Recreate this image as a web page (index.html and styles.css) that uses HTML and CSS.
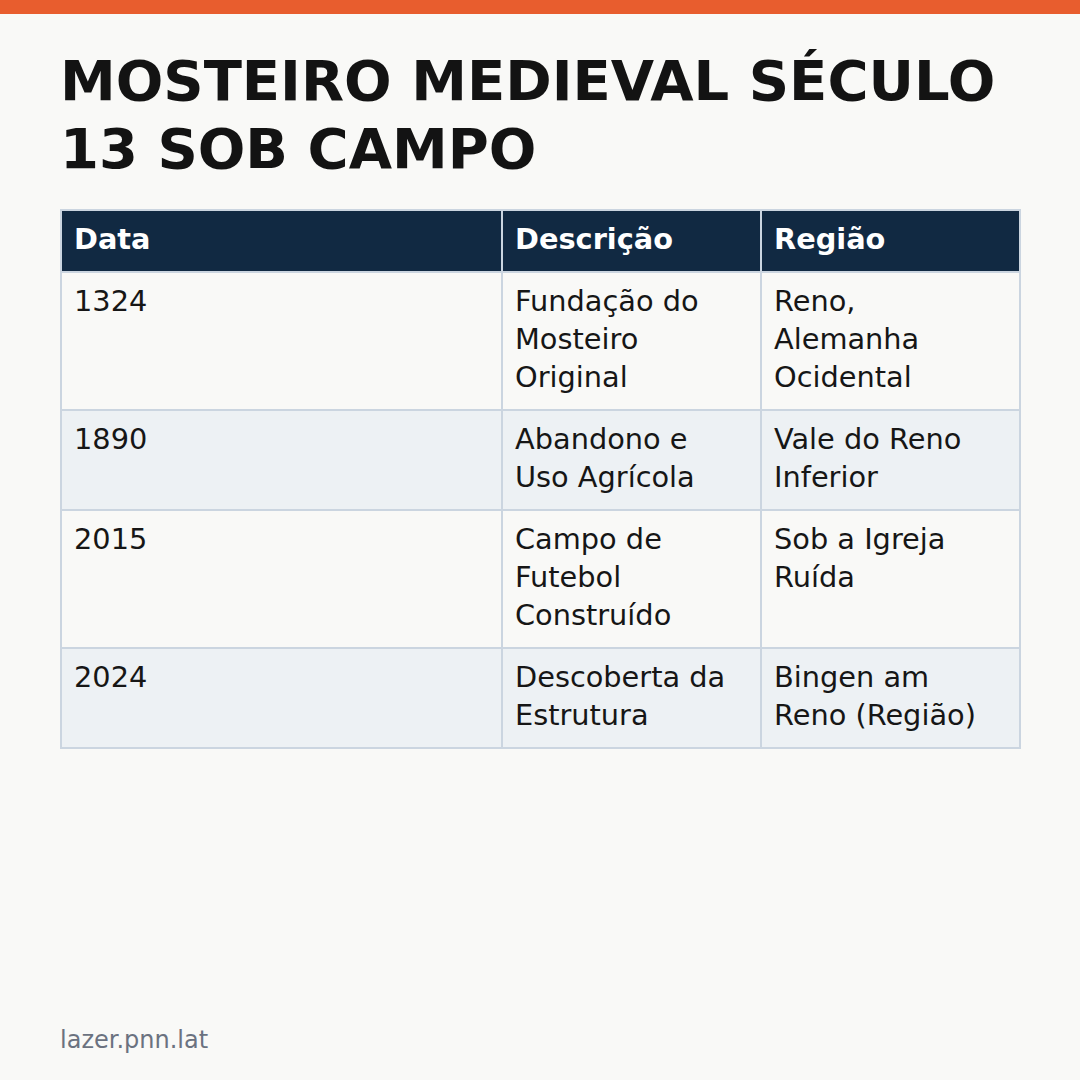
FILE: index.html
```html
<!DOCTYPE html>
<html lang="pt">
<head>
<meta charset="utf-8">
<link rel="stylesheet" href="styles.css">
</head>
<body>
<div class="topbar"></div>
<main class="page">
  <h1 class="title">MOSTEIRO MEDIEVAL SÉCULO 13 SOB CAMPO</h1>
  <table class="tbl">
    <colgroup>
      <col class="c1"><col class="c2"><col class="c3">
    </colgroup>
    <thead>
      <tr><th>Data</th><th>Descrição</th><th>Região</th></tr>
    </thead>
    <tbody>
      <tr><td>1324</td><td>Fundação do Mosteiro Original</td><td>Reno, Alemanha Ocidental</td></tr>
      <tr><td>1890</td><td>Abandono e Uso Agrícola</td><td>Vale do Reno Inferior</td></tr>
      <tr><td>2015</td><td>Campo de Futebol Construído</td><td>Sob a Igreja Ruída</td></tr>
      <tr><td>2024</td><td>Descoberta da Estrutura</td><td>Bingen am Reno (Região)</td></tr>
    </tbody>
  </table>
</main>
<footer class="footer">lazer.pnn.lat</footer>
</body>
</html>
```
FILE: styles.css
```css
html, body {
  margin: 0;
  padding: 0;
}
body {
  width: 1080px;
  height: 1080px;
  background: #f9f9f7;
  font-family: "DejaVu Sans", sans-serif;
  color: #161616;
  display: flex;
  flex-direction: column;
  overflow: hidden;
}
.topbar {
  height: 14px;
  background: #e85d2e;
  flex: none;
}
.page {
  padding: 33px 60px 0;
  flex: 1;
}
.title {
  margin: 0 0 26px;
  font-size: 56px;
  line-height: 68px;
  font-weight: bold;
  color: #131313;
}
.tbl {
  width: 959px;
  border-collapse: collapse;
  table-layout: fixed;
  font-size: 28.8px;
  line-height: 38px;
}
.c1 { width: 441px; }
.c2 { width: 259px; }
.c3 { width: 259px; }
.tbl th, .tbl td {
  border: 2px solid #cbd5e0;
  padding: 9px 12px 13px;
  text-align: left;
  vertical-align: top;
}
.tbl th {
  background: #112942;
  color: #ffffff;
  font-weight: bold;
}
.tbl tbody tr:nth-child(even) td {
  background: #edf1f4;
}
.tbl tbody tr:nth-child(odd) td {
  background: #f9f9f7;
}
.footer {
  padding: 0 60px 26px;
  font-size: 24px;
  color: #6b7280;
  flex: none;
}
```
